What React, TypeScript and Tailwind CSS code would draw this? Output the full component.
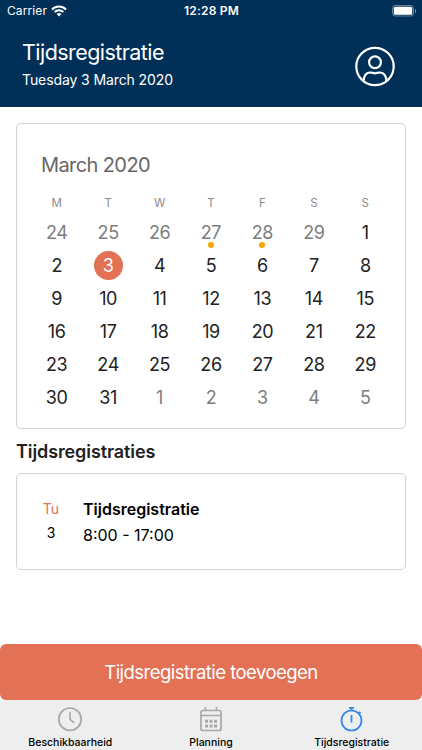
import React from 'react';
import clsx from 'clsx';

interface Day {
  label: number;
  outside?: boolean;
  marked?: boolean;
  selected?: boolean;
}

interface TabItemProps {
  label: string;
  children: React.ReactNode;
  className?: string;
}

const weekDays = ['M', 'T', 'W', 'T', 'F', 'S', 'S'];

const days: Day[] = [
  ...[24, 25, 26, 27, 28, 29].map((label) => ({
    label,
    outside: true,
    marked: label === 27 || label === 28,
  })),
  ...Array.from({ length: 31 }, (_, i) => ({ label: i + 1, selected: i === 2 })),
  ...[1, 2, 3, 4, 5].map((label) => ({ label, outside: true })),
];

const StatusBar = () => (
  <div className="grid h-[22px] grid-cols-3 items-center pl-[7px] pr-[5px] text-[12px]">
    <div className="flex items-center gap-[4px]">
      <span className="tracking-[0.1px]">Carrier</span>
      <svg className="h-[12px] w-[16px]" viewBox="0 0 16 12" fill="none" stroke="currentColor" strokeWidth="2.1">
        <path d="M1 4.4C5 .5 11 .5 15 4.4" />
        <path d="M3.6 7.1c2.6-2.4 6.2-2.4 8.8 0" />
        <path d="M8 11.4 5.6 9c1.4-1.3 3.4-1.3 4.8 0z" fill="currentColor" stroke="none" />
      </svg>
    </div>
    <span className="whitespace-nowrap pr-[1px] text-center font-semibold tracking-[0.2px]">12:28 PM</span>
    <svg className="h-[12px] w-[25px] justify-self-end" viewBox="0 0 25 12">
      <rect x=".5" y=".5" width="21" height="10.5" rx="2.8" fill="none" stroke="#fff" strokeOpacity=".4" />
      <rect x="1.8" y="1.8" width="18.4" height="7.9" rx="1.5" fill="#fff" />
      <path d="M23 4v4c1.6-.6 1.6-3.4 0-4z" fill="#fff" fillOpacity=".5" />
    </svg>
  </div>
);

const Header = () => (
  <header className="h-[107px] bg-[#003057] text-white">
    <StatusBar />
    <div className="flex items-start justify-between pl-[22px] pr-[27px] pt-[14px]">
      <div>
        <h1 className="text-[21.5px] leading-[32px] tracking-[-0.55px]">Tijdsregistratie</h1>
        <p className="mt-[1px] text-[14px] leading-[21px] tracking-[-0.1px]">Tuesday 3 March 2020</p>
      </div>
      <svg className="mt-[10px] h-[41px] w-[40px]" viewBox="0 0 40 41" fill="none" stroke="currentColor" strokeWidth="2.2">
        <circle cx="20" cy="20.5" r="18.7" />
        <circle cx="20" cy="16.3" r="5.9" />
        <path d="M8.8 35.2c-.6-4.7 2.2-8.7 6.4-8.7 1.9 0 3 .8 4.800.8s2.900-.8 4.800-.8c4.200 0 7 4 6.400 8.700" />
      </svg>
    </div>
  </header>
);

const DayCell: React.FC<{ day: Day }> = ({ day }) => (
  <div className="flex h-[33px] items-center justify-center">
    <span
      className={clsx(
        'relative flex size-[29px] items-center justify-center rounded-full',
        day.outside && 'text-[#7d7d7d]',
        day.selected && 'bg-[#e27156] text-white'
      )}
    >
      {day.label}
      {day.marked && <i className="absolute left-[11.5px] top-[24px] size-[6px] rounded-full bg-[#faa307]" />}
    </span>
  </div>
);

const Calendar = () => (
  <section className="h-[306px] rounded-[5px] border border-[#d3d3d3] px-[14px] pt-[26.5px]">
    <h2 className="pl-[10px] text-[20px] leading-[29px] tracking-[-0.6px] text-[#666]">March 2020</h2>
    <div className="mt-[16px] grid grid-cols-7 text-center text-[11.5px] leading-[15px] text-[#8a8a8a]">
      {weekDays.map((day, index) => (
        <span key={index}>{day}</span>
      ))}
    </div>
    <div className="mt-[5px] grid grid-cols-7 text-[18px] tracking-[-0.4px] text-[#222]">
      {days.map((day, index) => (
        <DayCell key={index} day={day} />
      ))}
    </div>
  </section>
);

const Registration = () => (
  <section className="flex h-[97px] items-start rounded-[5px] border border-[#d3d3d3] pt-[22px] text-black">
    <div className="ml-[16px] w-[36px] text-center text-[14px] leading-[24px]">
      <p className="pt-[1px] text-[#e27156]">Tu</p>
      <p>3</p>
    </div>
    <div className="ml-[14px] text-[16px] leading-[26px]">
      <p className="font-semibold">Tijdsregistratie</p>
      <p>8:00 - 17:00</p>
    </div>
  </section>
);

const TabItem: React.FC<TabItemProps> = ({ label, children, className }) => (
  <div className="flex flex-col items-center pt-[6px]">
    <svg className={clsx('size-[26px]', className)} viewBox="0 0 26 26" fill="none" stroke="currentColor" strokeWidth="1.7">
      {children}
    </svg>
    <span className="mt-[4px] text-[10.5px] font-medium leading-[14px] text-black">{label}</span>
  </div>
);

const TabBar = () => (
  <nav className="grid h-[50px] grid-cols-3 bg-[#eee]">
    <TabItem label="Beschikbaarheid" className="text-[#a8a8a8]">
      <circle cx="13" cy="13.2" r="11.2" />
      <path d="M13 6.5v6.8l3.7 3" strokeLinecap="round" strokeLinejoin="round" />
    </TabItem>
    <TabItem label="Planning" className="text-[#a8a8a8]">
      <rect x="3" y="4.5" width="20" height="20" rx="2" />
      <path d="M3 9.500h20M7.500 1v4M18.500 1v4" />
      <path d="M7 15.300h3M11.500 15.300h3M16 15.300h3M7 20h3M11.500 20h3M16 20h3" strokeWidth="3" />
    </TabItem>
    <TabItem label="Tijdsregistratie" className="text-[#2e86f0]">
      <circle cx="12.5" cy="14.5" r="10" />
      <path d="M12.500 9v7.500M10 1.900h5M12.500 1.500V5M19.800 6l1.800 1.300" />
    </TabItem>
  </nav>
);

const App = () => (
  <div className="flex h-[750px] w-[422px] flex-col overflow-hidden bg-white font-['Inter',sans-serif]">
    <Header />
    <main className="flex-1 px-[16px] pt-[16px]">
      <Calendar />
      <h2 className="mb-[7px] mt-[9px] text-[18px] font-semibold leading-[28px] tracking-[-0.1px] text-[#222]">
        Tijdsregistraties
      </h2>
      <Registration />
    </main>
    <div className="bg-white">
      <button className="block h-[56px] w-full rounded-[6px] bg-[#e27156] pt-[1px] text-[18.5px] tracking-[-0.53px] text-white">
        Tijdsregistratie toevoegen
      </button>
    </div>
    <TabBar />
  </div>
);

export default App;
